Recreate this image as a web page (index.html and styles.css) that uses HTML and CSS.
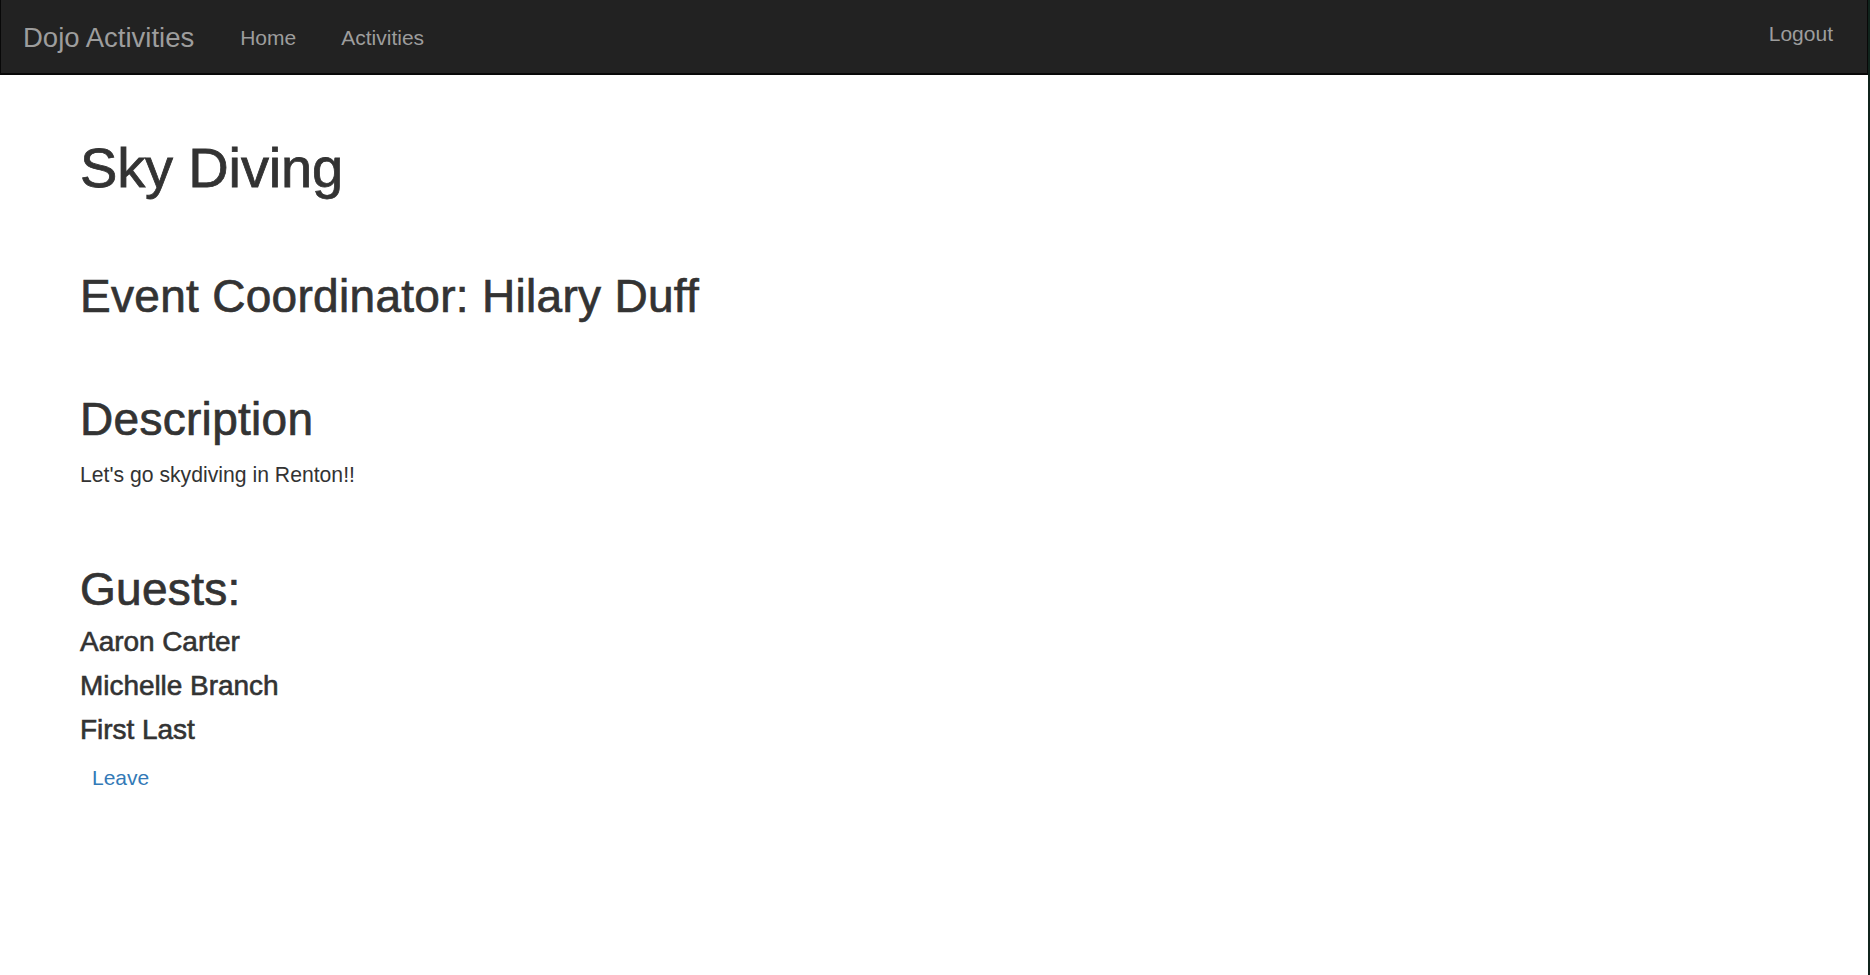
FILE: index.html
```html
<!DOCTYPE html>
<html lang="en">
<head>
<meta charset="utf-8">
<title>Sky Diving</title>
<link rel="stylesheet" href="styles.css">
</head>
<body>
<div class="page">
  <nav class="navbar">
    <a class="brand" href="#">Dojo Activities</a>
    <ul class="nav">
      <li><a class="nav-link" href="#">Home</a></li>
      <li><a class="nav-link" href="#">Activities</a></li>
    </ul>
    <a class="logout" href="#">Logout</a>
  </nav>
  <main class="content">
    <h1 class="title">Sky Diving</h1>
    <h2 class="section">Event Coordinator: Hilary Duff</h2>
    <h2 class="section">Description</h2>
    <p class="desc">Let's go skydiving in Renton!!</p>
    <h2 class="section guests-title">Guests:</h2>
    <ul class="guests">
      <li class="guest">Aaron Carter</li>
      <li class="guest">Michelle Branch</li>
      <li class="guest">First Last</li>
    </ul>
    <a class="leave" href="#">Leave</a>
  </main>
</div>
<div class="desk"></div>
</body>
</html>
```
FILE: styles.css
```css
html, body {
  margin: 0;
  padding: 0;
  height: 100%;
}
body {
  display: flex;
  font-family: "Liberation Sans", Arial, sans-serif;
  color: #333333;
  background: #ffffff;
}
.page {
  flex: 1;
  min-width: 0;
  background: #ffffff;
}
.desk {
  width: 2px;
  background: #10241c;
}
a {
  text-decoration: none;
}

/* navbar */
.navbar {
  display: flex;
  align-items: flex-start;
  height: 73px;
  background: #222222;
  border-left: 1px solid #080808;
  border-right: 1px solid #080808;
  border-bottom: 2px solid #080808;
  padding: 0 34px 0 22px;
}
.brand {
  color: #9d9d9d;
  font-size: 27.5px;
  line-height: 75px;
  height: 73px;
  padding-right: 23.5px;
}
.nav {
  display: flex;
  list-style: none;
  margin: 0;
  padding: 0;
}
.nav-link {
  display: block;
  color: #9d9d9d;
  font-size: 21px;
  line-height: 75px;
  height: 73px;
  padding: 0 22.5px;
}
.logout {
  margin-left: auto;
  color: #9d9d9d;
  font-size: 21px;
  line-height: 67px;
}

/* content */
.content {
  display: flex;
  flex-direction: column;
  align-items: flex-start;
  padding-left: 80px;
}
.title {
  margin: 62.5px 0 0;
  font-size: 56px;
  line-height: 60px;
  font-weight: 400;
  letter-spacing: -0.15px;
  -webkit-text-stroke: 0.8px #333333;
}
.section {
  margin: 73px 0 0;
  font-size: 46px;
  line-height: 50px;
  font-weight: 400;
  letter-spacing: 0.3px;
  -webkit-text-stroke: 0.7px #333333;
}
.desc {
  margin: 16px 0 0;
  font-size: 21.2px;
  line-height: 30px;
}
.guests-title {
  margin-top: 74px;
}
.guests {
  list-style: none;
  margin: 6.5px 0 0;
  padding: 0;
}
.guest {
  font-size: 28px;
  line-height: 44px;
  letter-spacing: -0.05px;
  -webkit-text-stroke: 0.6px #333333;
}
.leave {
  margin: 11px 0 0 12px;
  font-size: 21px;
  line-height: 30px;
  color: #337ab7;
}
```
